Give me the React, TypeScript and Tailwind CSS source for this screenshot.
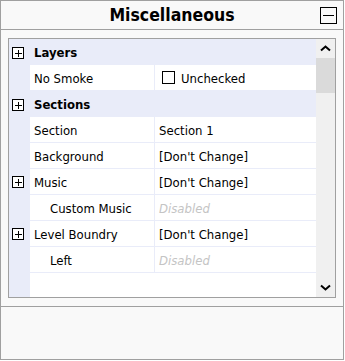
const font = "font-['DejaVu_Sans_Condensed','DejaVu_Sans',sans-serif]";

function PlusBox() {
  return (
    <div className="w-[12px] h-[12px] border border-black bg-white flex items-center justify-center">
      <svg width="10" height="10" viewBox="0 0 10 10">
        <path d="M1.5 5h7M5 1.5v7" stroke="black" strokeWidth="1" shapeRendering="crispEdges" />
      </svg>
    </div>
  );
}

function Chevron({ down }: { down?: boolean }) {
  return (
    <svg width="11" height="7" viewBox="0 0 11 7">
      <path
        d={down ? 'M1 1.5l4.5 4 4.5-4' : 'M1 5.5l4.5-4 4.5 4'}
        fill="none"
        stroke="black"
        strokeWidth="2"
      />
    </svg>
  );
}

type Row =
  | { kind: 'cat'; label: string }
  | { kind: 'prop'; label: string; value: string; plus?: boolean; indent?: boolean; disabled?: boolean; check?: boolean };

const rows: Row[] = [
  { kind: 'cat', label: 'Layers' },
  { kind: 'prop', label: 'No Smoke', value: 'Unchecked', check: true },
  { kind: 'cat', label: 'Sections' },
  { kind: 'prop', label: 'Section', value: 'Section 1' },
  { kind: 'prop', label: 'Background', value: "[Don't Change]" },
  { kind: 'prop', label: 'Music', value: "[Don't Change]", plus: true },
  { kind: 'prop', label: 'Custom Music', value: 'Disabled', indent: true, disabled: true },
  { kind: 'prop', label: 'Level Boundry', value: "[Don't Change]", plus: true },
  { kind: 'prop', label: 'Left', value: 'Disabled', indent: true, disabled: true },
];

export default function App() {
  return (
    <div className={`w-[344px] h-[360px] border border-[#a0a0a0] bg-[#f9f9f9] flex flex-col text-[13px] text-black ${font}`}>
      {/* header */}
      <div className="h-[29px] border-b border-[#a0a0a0] flex items-center relative shrink-0">
        <div className="flex-1 text-center font-bold text-[17.5px] leading-none pt-px">Miscellaneous</div>
        <div className="absolute right-[6px] top-[6px] w-[17px] h-[17px] border border-black flex items-center justify-center">
          <div className="w-[11px] h-px bg-black" />
        </div>
      </div>

      {/* property grid */}
      <div className="mx-[7px] mt-[8px] h-[260px] border border-[#a0a0a0] bg-white flex shrink-0">
        <div className="flex-1 flex flex-col relative">
          {rows.map((r, i) =>
            r.kind === 'cat' ? (
              <div key={i} className="h-[26px] bg-[#e9ecf9] flex items-center">
                <div className="w-[21px] flex pl-[3px] pt-px">
                  <PlusBox />
                </div>
                <div className="pl-[4px] pt-[2px] font-bold">{r.label}</div>
              </div>
            ) : (
              <div key={i} className="h-[26px] flex">
                <div className="w-[21px] bg-[#e9ecf9] flex items-center pl-[3px]">
                  {r.plus && <PlusBox />}
                </div>
                <div className="flex-1 flex border-b border-[#e9ecf9]">
                  <div className={`w-[125px] flex items-center pt-[2px] border-r border-[#e9ecf9] ${r.indent ? 'pl-[20px]' : 'pl-[4px]'}`}>
                    {r.label}
                  </div>
                  <div className="flex-1 flex items-center pl-[4px] pt-[2px]">
                    {r.check && <div className="w-[13px] h-[13px] border border-black mr-[6px] ml-[3px] -mt-[2px]" />}
                    <span className={r.disabled ? 'italic text-[#c4c4c4]' : ''}>{r.value}</span>
                  </div>
                </div>
              </div>
            )
          )}
          <div className="flex-1 flex">
            <div className="w-[21px] bg-[#e9ecf9]" />
            <div className="flex-1" />
          </div>
        </div>
        {/* scrollbar */}
        <div className="w-[19px] bg-[#f0f0f0] flex flex-col items-center">
          <div className="h-[19px] flex items-center justify-center">
            <Chevron />
          </div>
          <div className="w-[19px] h-[35px] bg-[#dadada]" />
          <div className="flex-1" />
          <div className="h-[19px] flex items-center justify-center">
            <Chevron down />
          </div>
        </div>
      </div>

      {/* bottom panel */}
      <div className="mt-[8px] flex-1 border-t border-[#a0a0a0]" />
    </div>
  );
}
